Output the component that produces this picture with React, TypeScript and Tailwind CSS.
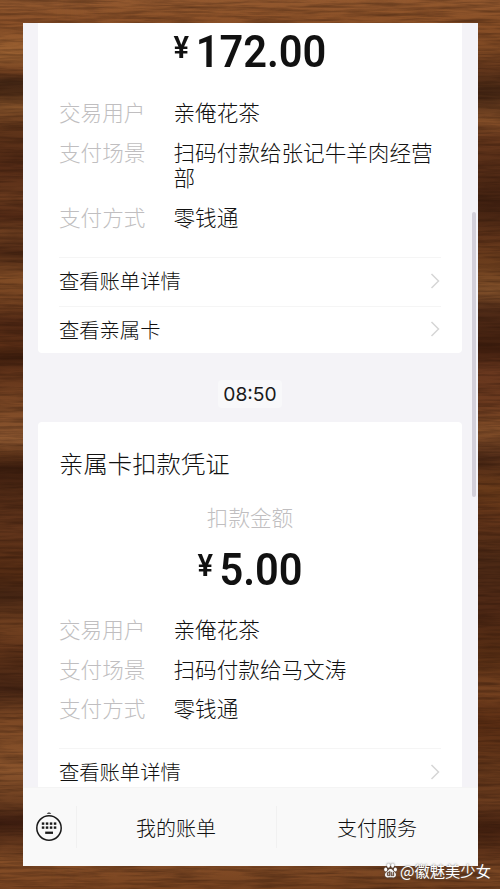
import React from 'react';
import { clsx } from 'clsx';

const firstDetails = [
  { label: '交易用户', value: '亲俺花茶' },
  { label: '支付场景', value: '扫码付款给张记牛羊肉经营部' },
  { label: '支付方式', value: '零钱通' },
];

const secondDetails = [
  { label: '交易用户', value: '亲俺花茶' },
  { label: '支付场景', value: '扫码付款给马文涛' },
  { label: '支付方式', value: '零钱通' },
];

// [y, colour] bands of the wooden table, top to bottom
const leftBands: [number, string][] = [
  [0, '#945a30'], [22, '#8a5028'], [55, '#9c6232'], [72, '#703f1f'], [82, '#432614'], [92, '#4b2a15'],
  [108, '#85522a'], [128, '#60351a'], [165, '#532a15'], [200, '#6b3b1e'], [216, '#502814'],
  [232, '#6e3f20'], [252, '#502a15'], [277, '#824d26'], [305, '#703f1f'], [322, '#502814'],
  [345, '#5c2f16'], [358, '#3d1d0d'], [370, '#5e3118'], [405, '#7c4825'], [440, '#8c5730'],
  [455, '#60351a'], [468, '#3b1d0e'], [492, '#502a15'], [530, '#62351b'], [575, '#532b13'],
  [595, '#452513'], [625, '#724120'], [650, '#62351a'], [690, '#452413'], [718, '#7c4824'],
  [770, '#8a542c'], [805, '#683b1e'], [822, '#3c1c0f'], [842, '#62361b'], [862, '#854e27'], [889, '#7b4521'],
];

const rightBands: [number, string][] = [
  [0, '#92582e'], [22, '#8a5027'], [50, '#7d4823'], [70, '#62361b'], [92, '#432513'], [122, '#824d27'],
  [140, '#66371c'], [175, '#512a15'], [205, '#402010'], [240, '#62351a'], [265, '#6c3e1d'],
  [290, '#84522b'], [310, '#502b17'], [350, '#401e0e'], [370, '#68371e'], [405, '#6d3b1f'],
  [430, '#85502a'], [458, '#502b17'], [490, '#6c3c1a'], [520, '#623419'], [560, '#4c2915'],
  [610, '#502915'], [655, '#562d13'], [690, '#764220'], [722, '#5c2e13'], [765, '#64371a'],
  [800, '#6b3c1e'], [828, '#43200f'], [855, '#62351a'], [872, '#7c4824'], [889, '#6f3e1d'],
];

function Wood() {
  return (
    <svg className="absolute inset-0 h-full w-full" viewBox="0 0 500 889" preserveAspectRatio="none">
      <defs>
        <linearGradient id="woodLeft" x1="0" y1="0" x2="0" y2="1">
          {leftBands.map(([y, color]) => (
            <stop key={y} offset={y / 889} stopColor={color} />
          ))}
        </linearGradient>
        <linearGradient id="woodRight" x1="0" y1="0" x2="0" y2="1">
          {rightBands.map(([y, color]) => (
            <stop key={y} offset={y / 889} stopColor={color} />
          ))}
        </linearGradient>
        <linearGradient id="fade">
          <stop offset="0.1" stopColor="#000" />
          <stop offset="0.9" stopColor="#fff" />
        </linearGradient>
        <mask id="rightSide">
          <rect width="500" height="889" fill="url(#fade)" />
        </mask>
        <filter id="grain" x="0" y="0" width="100%" height="100%" colorInterpolationFilters="sRGB">
          <feTurbulence type="fractalNoise" baseFrequency="0.02 0.3" numOctaves="4" seed="8" />
          <feColorMatrix values="0 0 0 0 0.14  0 0 0 0 0.06  0 0 0 0 0.02  0.8 0 0 0 -0.28" />
        </filter>
      </defs>
      <rect width="500" height="889" fill="url(#woodLeft)" />
      <rect width="500" height="889" fill="url(#woodRight)" mask="url(#rightSide)" />
      <rect width="500" height="889" filter="url(#grain)" />
    </svg>
  );
}

function Amount({ value }: { value: string }) {
  return (
    <div className="flex scale-x-[0.925] items-start justify-center font-[Roboto,sans-serif] font-semibold text-[#111]">
      <span className="mr-[7px] mt-[3px] text-[31.5px] leading-[37px]">¥</span>
      <span className="text-[45px] leading-[52px]">{value}</span>
    </div>
  );
}

function Details({ items }: { items: { label: string; value: string }[] }) {
  return (
    <div className="flex flex-col gap-[14px] text-[21.6px] leading-[25.7px]">
      {items.map((item) => (
        <div key={item.label} className="flex">
          <span className="w-[114.5px] shrink-0 text-[#c0bec0]">{item.label}</span>
          <span className="w-[264px] text-[#111]">{item.value}</span>
        </div>
      ))}
    </div>
  );
}

function LinkRow({ text }: { text: string }) {
  return (
    <div className="flex h-[48.5px] shrink-0 items-center justify-between border-t border-[#f5f5f5] pb-[2px] text-[20.3px] text-[#111]">
      <span className="pb-[1px]">{text}</span>
      <svg className="mr-px h-4 w-[10px]" viewBox="0 0 10 16" fill="none" stroke="#d6d6d6" strokeWidth="1.5">
        <path d="M1.5 1L8.5 8L1.5 15" />
      </svg>
    </div>
  );
}

function KeyboardIcon() {
  const keys = [19, 23, 27, 31];
  return (
    <svg className="h-[32px] w-[28px]" viewBox="0 0 28 32" fill="none">
      <circle cx="14" cy="18" r="12.2" stroke="#1a1a1a" strokeWidth="1.5" />
      <path d="M11.7 3.8Q14 1 16.3 3.8Z" fill="#1a1a1a" />
      {keys.map((x) => (
        <g key={x} fill="#1a1a1a">
          <rect x={x - 12.2} y="12.4" width="2.5" height="2.4" />
          <rect x={x - 12.2} y="16.4" width="2.5" height="2.4" />
        </g>
      ))}
      <rect x="10.2" y="21.6" width="7.8" height="2.3" fill="#1a1a1a" />
    </svg>
  );
}

function Watermark() {
  return (
    <div className="absolute left-[384px] top-[859px] flex items-center whitespace-nowrap text-[15.3px] leading-[22px] font-normal text-white [text-shadow:0_0_2px_#555]">
      <svg className="mr-[3px] h-[15px] w-[13px] drop-shadow-[0_0_1px_#555]" viewBox="0 0 13 15" fill="#fff">
        <ellipse cx="1.7" cy="6.4" rx="1.5" ry="2" />
        <ellipse cx="4.5" cy="2.6" rx="1.5" ry="2.2" />
        <ellipse cx="8.6" cy="2.6" rx="1.5" ry="2.2" />
        <ellipse cx="11.4" cy="6.4" rx="1.5" ry="2" />
        <path d="M6.5 6C8.5 6 9 8 10.7 9.3C13 11 12 14.5 9.4 14.4C7.5 14.2 5.5 14.2 3.6 14.4C1 14.5 0 11 2.3 9.3C4 8 4.5 6 6.5 6Z" />
        <text x="6.5" y="13" textAnchor="middle" fontSize="6" fontWeight="700" fill="#6b4a35" fontFamily="Inter">du</text>
      </svg>
      <span>@徽魅美少女</span>
    </div>
  );
}

export default function App() {
  const tabs = ['我的账单', '支付服务'];

  return (
    <div className="relative h-[889px] w-[500px] overflow-hidden px-[22.5px] pt-[23px] font-['Noto_Sans_CJK_SC',sans-serif] font-light">
      <Wood />
      <div className="relative flex h-[843px] flex-col overflow-hidden bg-[#f4f3f7]">
        {/* Messages */}
        <div className="flex h-[764px] flex-col overflow-hidden px-[15.5px]">
          <div className="h-[330px] shrink-0 rounded-b-[4px] bg-white px-[21px] pt-[3px]">
            <Amount value="172.00" />
            <div className="h-[179px] pt-[21px]">
              <Details items={firstDetails} />
            </div>
            <LinkRow text="查看账单详情" />
            <LinkRow text="查看亲属卡" />
          </div>

          <div className="flex h-[69px] shrink-0 items-center justify-center pt-[13px]">
            <span className="rounded bg-[#f8f8fa] px-[5px] font-[Inter,sans-serif] text-[19.3px] leading-[28px] font-normal text-[#1a1a1a]">08:50</span>
          </div>

          <div className="h-[400px] shrink-0 rounded-t-[4px] bg-white px-[21px] pt-[23px]">
            <h2 className="text-[24.4px] leading-[36px] text-[#111]">亲属卡扣款凭证</h2>
            <p className="mt-[21px] text-center text-[21.6px] leading-[30px] text-[#c0bec0]">扣款金额</p>
            <div className="mt-[12px]">
              <Amount value="5.00" />
            </div>
            <div className="h-[152px] pt-[20px]">
              <Details items={secondDetails} />
            </div>
            <LinkRow text="查看账单详情" />
          </div>
        </div>

        {/* Scroll thumb */}
        <div className="absolute right-[2px] top-[189px] h-[285px] w-[4px] rounded-full bg-[#d3d0da]" />

        <div className="flex h-[79px] shrink-0 items-center border-t border-[#f4f4f4] bg-[#f9f9f9]">
          <div className="flex w-[53px] justify-center pb-[3px]">
            <KeyboardIcon />
          </div>
          {tabs.map((tab, i) => (
            <div
              key={tab}
              className={clsx(
                'flex h-[42px] items-center justify-center border-l border-[#f1f1f1] pt-[2px] text-[20px] text-[#111]',
                i === 0 ? 'w-[200px]' : 'flex-1',
              )}
            >
              {tab}
            </div>
          ))}
        </div>
      </div>
      <Watermark />
    </div>
  );
}
